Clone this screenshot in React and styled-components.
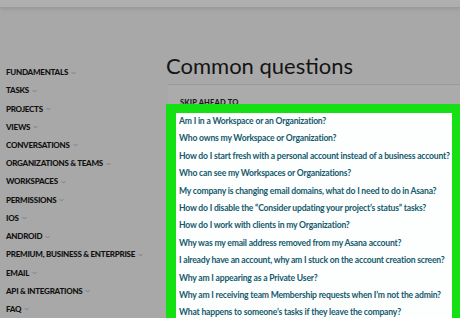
import React from "react";
import styled, { createGlobalStyle } from "styled-components";

const Global = createGlobalStyle`
  html, body { margin: 0; padding: 0; }
  body {
    background: #a8a8a8;
    width: 460px;
    height: 318px;
    overflow: hidden;
    font-family: "Lato", "Noto Sans", sans-serif;
  }
`;

const Page = styled.div`
  width: 460px;
  height: 318px;
  overflow: hidden;
  display: flex;
  flex-direction: column;
`;

const TopBar = styled.div`
  height: 7px;
  flex: none;
  background: #afafaf;
  border-bottom: 1px solid #9b9b9b;
  box-shadow: 0 1px 4px rgba(0, 0, 0, 0.12);
`;

const Body = styled.div`
  display: flex;
  flex: 1;
  min-height: 0;
`;

const Sidebar = styled.nav`
  width: 161px;
  flex: none;
  padding: 55px 0 0 6px;
  display: flex;
  flex-direction: column;
`;

const NavItem = styled.div`
  height: 18.38px;
  display: flex;
  align-items: center;
  font-family: "Lato", sans-serif;
  font-weight: 900;
  font-size: 8px;
  letter-spacing: -0.25px;
  color: #111;
  white-space: nowrap;
`;

const Chevron = styled.svg`
  width: 5px;
  height: 4px;
  margin-left: 3px;
  margin-top: 1px;
  flex: none;
`;

const Content = styled.main`
  flex: 1;
  display: flex;
  flex-direction: column;
  padding-top: 43px;
  min-width: 0;
`;

const Title = styled.h1`
  margin: 0 0 0 -1px;
  font-family: "Lato", sans-serif;
  font-weight: 400;
  font-size: 22px;
  line-height: 30px;
  color: #141414;
  letter-spacing: 0;
`;

const Panel = styled.section`
  margin-top: 3px;
  margin-left: 1px;
  background: #ababab;
  border-top: 1px solid #9a9a9a;
  padding-top: 13px;
  flex: 1;
`;

const PanelLabel = styled.div`
  padding-left: 12px;
  font-family: "Lato", sans-serif;
  font-weight: 900;
  font-size: 7.5px;
  line-height: 10px;
  color: #1a1a1a;
  letter-spacing: 0.2px;
`;

const Highlight = styled.div`
  margin-top: -4px;
  margin-left: -2px;
  border: solid #14e014;
  border-width: 9px 8px 9px 10px;
  background: #fdfefe;
  padding: 0 0 0 3px;
  position: relative;
`;

const Question = styled.a`
  display: block;
  font-family: "Lato", sans-serif;
  font-weight: 700;
  font-size: 8.6px;
  line-height: 17.4px;
  color: #145a6c;
  text-decoration: none;
  white-space: nowrap;
  letter-spacing: -0.2px;
`;

const sections = [
  "FUNDAMENTALS",
  "TASKS",
  "PROJECTS",
  "VIEWS",
  "CONVERSATIONS",
  "ORGANIZATIONS & TEAMS",
  "WORKSPACES",
  "PERMISSIONS",
  "IOS",
  "ANDROID",
  "PREMIUM, BUSINESS & ENTERPRISE",
  "EMAIL",
  "API & INTEGRATIONS",
  "FAQ",
];

const questions = [
  "Am I in a Workspace or an Organization?",
  "Who owns my Workspace or Organization?",
  "How do I start fresh with a personal account instead of a business account?",
  "Who can see my Workspaces or Organizations?",
  "My company is changing email domains, what do I need to do in Asana?",
  "How do I disable the \u201cConsider updating your project\u2019s status\u201d tasks?",
  "How do I work with clients in my Organization?",
  "Why was my email address removed from my Asana account?",
  "I already have an account, why am I stuck on the account creation screen?",
  "Why am I appearing as a Private User?",
  "Why am I receiving team Membership requests when I\u2019m not the admin?",
  "What happens to someone\u2019s tasks if they leave the company?",
];

export default function App() {
  return (
    <Page>
      <Global />
      <TopBar />
      <Body>
        <Sidebar>
          {sections.map((s) => (
            <NavItem key={s}>
              {s}
              <Chevron viewBox="0 0 5 4">
                <path d="M0.5 1 L2.5 3 L4.5 1" fill="none" stroke="#7a7a7a" strokeWidth="0.9" />
              </Chevron>
            </NavItem>
          ))}
        </Sidebar>
        <Content>
          <Title>Common questions</Title>
          <Panel>
            <PanelLabel>SKIP AHEAD TO</PanelLabel>
            <Highlight>
              {questions.map((q) => (
                <Question key={q} href="#">
                  {q}
                </Question>
              ))}
            </Highlight>
          </Panel>
        </Content>
      </Body>
    </Page>
  );
}
